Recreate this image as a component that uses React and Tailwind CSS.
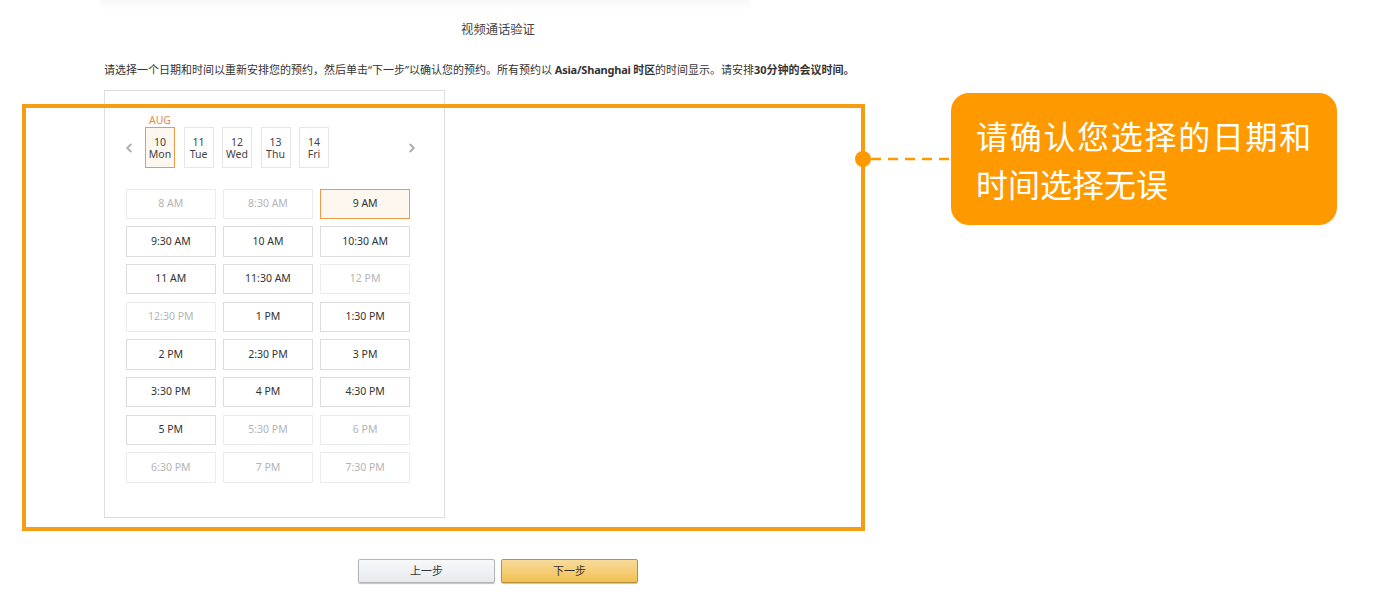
import { ChevronLeft, ChevronRight } from "lucide-react";

const days = [
  { num: "10", name: "Mon", active: true },
  { num: "11", name: "Tue" },
  { num: "12", name: "Wed" },
  { num: "13", name: "Thu" },
  { num: "14", name: "Fri" },
];

const slots = [
  { label: "8 AM", off: true },
  { label: "8:30 AM", off: true },
  { label: "9 AM", active: true },
  { label: "9:30 AM" },
  { label: "10 AM" },
  { label: "10:30 AM" },
  { label: "11 AM" },
  { label: "11:30 AM" },
  { label: "12 PM", off: true },
  { label: "12:30 PM", off: true },
  { label: "1 PM" },
  { label: "1:30 PM" },
  { label: "2 PM" },
  { label: "2:30 PM" },
  { label: "3 PM" },
  { label: "3:30 PM" },
  { label: "4 PM" },
  { label: "4:30 PM" },
  { label: "5 PM" },
  { label: "5:30 PM", off: true },
  { label: "6 PM", off: true },
  { label: "6:30 PM", off: true },
  { label: "7 PM", off: true },
  { label: "7:30 PM", off: true },
];

function DayTab({ day }) {
  return (
    <div
      className={`flex h-[41px] w-[30px] flex-col items-center justify-center border text-[10.5px] leading-[12px] text-[#444] ${
        day.active ? "border-[#ee9a4d] bg-[#fdf7ef]" : "border-[#e6e6e6] bg-white"
      }`}
    >
      <span>{day.num}</span>
      <span>{day.name}</span>
    </div>
  );
}

function Slot({ slot }) {
  let tone = "border-[#dcdcdc] text-[#333]";
  if (slot.off) tone = "border-[#ececec] text-[#b4b4b4]";
  if (slot.active) tone = "border-[#ee9a4d] bg-[#fdf7ef] text-[#333]";
  return (
    <div className={`flex h-[30.5px] items-center justify-center border text-[10.5px] ${tone}`}>
      {slot.label}
    </div>
  );
}

export default function App() {
  return (
    <div className="relative h-[594px] w-[1383px] overflow-hidden bg-white font-['Noto_Sans','Noto_Sans_CJK_SC',sans-serif] text-[#333]">
      <div className="mx-[100px] h-[10px] w-[650px] bg-gradient-to-b from-[#f8f8f8] to-white" />

      <div className="w-[996px]">
        <h1 className="mt-[13px] text-center text-[12.3px] leading-[14px] font-normal text-[#444]">视频通话验证</h1>
        <p className="mt-[26px] ml-[104px] whitespace-nowrap text-[11px] leading-[14px] text-[#333]">
          请选择一个日期和时间以重新安排您的预约，然后单击“下一步”以确认您的预约。所有预约以{" "}
          <b className="font-bold tracking-[-0.2px]">Asia/Shanghai 时区</b>的时间显示。请安排<b className="font-bold">30分钟的会议时间。</b>
        </p>

        <div className="mt-[13px] ml-[104px] h-[428px] w-[341px] border border-[#dedede] pt-[23px] pl-[21px]">
          <div className="ml-[19px] w-[30px] text-center text-[10.5px] leading-[13px] text-[#e8873f]">AUG</div>
          <div className="-ml-[4px] flex h-[41px] w-[297px] items-center">
            <ChevronLeft size={14} strokeWidth={3.5} className="text-[#b0b0b0]" />
            <div className="ml-[9px] flex gap-[8.5px]">
              {days.map((day) => (
                <DayTab key={day.num} day={day} />
              ))}
            </div>
            <ChevronRight size={14} strokeWidth={3.5} className="ml-auto text-[#b0b0b0]" />
          </div>
          <div className="mt-[20.5px] grid w-[284px] grid-cols-3 gap-x-[7.5px] gap-y-[7.2px]">
            {slots.map((slot) => (
              <Slot key={slot.label} slot={slot} />
            ))}
          </div>
        </div>

        <div className="mt-[41px] flex justify-center gap-[6px]">
          <button className="h-[24px] w-[137px] rounded-[2px] border border-[#b4b6ba] bg-gradient-to-b from-[#f7f8fa] to-[#e8eaee] text-[11px] text-[#333] shadow-[0_1px_1px_rgba(0,0,0,0.25)]">
            上一步
          </button>
          <button className="h-[24px] w-[137px] rounded-[2px] border border-[#b8913c] bg-gradient-to-b from-[#f8dc9a] to-[#f1c04f] text-[11px] text-[#333] shadow-[0_1px_1px_rgba(0,0,0,0.25)]">
            下一步
          </button>
        </div>
      </div>

      {/* annotation overlay */}
      <div className="absolute top-[103.5px] left-[22px] h-[427.5px] w-[843px] border-4 border-[#f79d14]" />
      <div className="absolute top-[151px] left-[855px] size-4 rounded-full bg-[#ff9900]" />
      <svg className="absolute top-[157px] left-[871px]" width="80" height="4">
        <line x1="0" y1="2" x2="80" y2="2" stroke="#ff9900" strokeWidth="2.5" strokeDasharray="10 7" />
      </svg>
      <div className="absolute top-[93px] left-[951px] h-[132px] w-[386px] rounded-[18px] bg-[#ff9900] pt-[20px] pl-[25px] text-[32px] leading-[48px] text-white">
        <span className="tracking-[1.7px]">请确认您选择的日期和</span>
        <br />
        时间选择无误
      </div>
    </div>
  );
}
